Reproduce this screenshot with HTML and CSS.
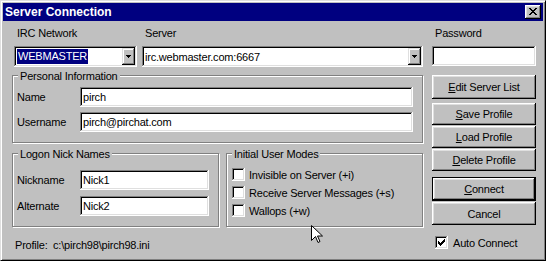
FILE: index.html
```html
<!DOCTYPE html>
<html lang="en">
<head>
  <meta charset="UTF-8">
  <title>Server Connection</title>
  <link rel="stylesheet" href="styles.css">
</head>
<body>
<div class="window">
  <div class="titlebar">
    <span class="title">Server Connection</span>
    <span class="close">
      <svg width="8" height="7" viewBox="0 0 8 7" shape-rendering="crispEdges"><path d="M0 0h2v1h-2z M6 0h2v1h-2z M1 1h2v1h-2z M5 1h2v1h-2z M2 2h4v1h-4z M3 3h2v1h-2z M2 4h4v1h-4z M1 5h2v1h-2z M5 5h2v1h-2z M0 6h2v1h-2z M6 6h2v1h-2z" fill="#000"/></svg>
    </span>
  </div>

  <div class="client">
    <div class="left">
      <div class="toprow">
        <div class="field network">
          <div class="caption">IRC Network</div>
          <div class="combo">
            <span class="selected">WEBMASTER</span>
            <span class="drop"><svg width="5" height="3" viewBox="0 0 5 3" shape-rendering="crispEdges"><path d="M0 0h5v1h-5z M1 1h3v1h-3z M2 2h1v1h-1z" fill="#000"/></svg></span>
          </div>
        </div>
        <div class="field server">
          <div class="caption">Server</div>
          <div class="combo">
            <span class="value">irc.webmaster.com:6667</span>
            <span class="drop"><svg width="5" height="3" viewBox="0 0 5 3" shape-rendering="crispEdges"><path d="M0 0h5v1h-5z M1 1h3v1h-3z M2 2h1v1h-1z" fill="#000"/></svg></span>
          </div>
        </div>
      </div>

      <div class="group personal">
        <div class="legend">Personal Information</div>
        <div class="row"><span class="label">Name</span><div class="edit wide">pirch</div></div>
        <div class="row"><span class="label">Username</span><div class="edit wide">pirch@pirchat.com</div></div>
      </div>

      <div class="bottomrow">
        <div class="group logon">
          <div class="legend">Logon Nick Names</div>
          <div class="row"><span class="label">Nickname</span><div class="edit nick">Nick1</div></div>
          <div class="row"><span class="label">Alternate</span><div class="edit nick">Nick2</div></div>
        </div>
        <div class="group modes">
          <div class="legend">Initial User Modes</div>
          <div class="check"><span class="box"></span>Invisible on Server (+i)</div>
          <div class="check"><span class="box"></span>Receive Server Messages (+s)</div>
          <div class="check"><span class="box"></span>Wallops (+w)</div>
        </div>
      </div>

      <div class="profile"><span class="profile-label">Profile:</span><span>c:\pirch98\pirch98.ini</span></div>
    </div>

    <div class="right">
      <div class="caption">Password</div>
      <div class="edit password"></div>
      <div class="btn edit-list"><span><u>E</u>dit Server List</span></div>
      <div class="btn save"><span><u>S</u>ave Profile</span></div>
      <div class="btn load"><span><u>L</u>oad Profile</span></div>
      <div class="btn delete"><span><u>D</u>elete Profile</span></div>
      <div class="btn connect"><span><u>C</u>onnect</span></div>
      <div class="btn cancel"><span>Cancel</span></div>
      <div class="check auto">
        <span class="box">
          <svg width="7" height="7" viewBox="0 0 7 7" shape-rendering="crispEdges"><path d="M6 0h1v1h-1z M5 1h2v1h-2z M0 2h1v1h-1z M4 2h3v1h-3z M0 3h2v1h-2z M3 3h3v1h-3z M0 4h5v1h-5z M1 5h3v1h-3z M2 6h1v1h-1z" fill="#000"/></svg>
        </span>Auto Connect
      </div>
    </div>
  </div>

  <!-- mouse pointer left in the shot -->
  <svg class="cursor" width="12" height="19" viewBox="0 0 12 19"><path d="M0.5 0.5 V15.5 L4.5 11.5 L7 17.5 L9 16.5 L6.5 11 H11.5 Z" fill="#fff" stroke="#000" stroke-width="1"/></svg>
</div>
</body>
</html>
```

FILE: styles.css
```css
body {
  margin: 0;
  background: #c0c0c0;
  font-family: "Liberation Sans", Arial, sans-serif;
  font-size: 11px;
  letter-spacing: -0.2px;
  color: #000;
}

/* window frame */
.window {
  position: relative;
  width: 546px;
  height: 261px;
  box-sizing: border-box;
  background: #c0c0c0;
  border: 1px solid;
  border-color: #dfdfdf #000 #000 #dfdfdf;
  box-shadow: inset 1px 1px #fff, inset -1px -1px #808080;
  padding: 2px;
}

.titlebar {
  height: 18px;
  background: #000080;
  color: #fff;
  display: flex;
  align-items: center;
  justify-content: space-between;
  padding: 0 2px;
}
.title {
  font-size: 12px;
  font-weight: bold;
  letter-spacing: 0;
}
.close {
  width: 16px;
  height: 14px;
  box-sizing: border-box;
  padding: 3px 0 0 4px;
  background: #c0c0c0;
  box-shadow: inset -1px -1px #000, inset 1px 1px #fff, inset -2px -2px #808080, inset 2px 2px #dfdfdf;
}
.close svg { display: block; }

.client {
  display: flex;
  gap: 9px;
  padding: 6px 0 0 9px;
}
.left { width: 411px; }
.right {
  width: 104px;
  display: flex;
  flex-direction: column;
}

.caption {
  height: 13px;
  line-height: 13px;
  padding-left: 3px;
  margin-bottom: 6px;
  white-space: nowrap;
}

/* sunken controls */
.combo, .edit, .box {
  background: #fff;
  box-shadow: inset -1px -1px #fff, inset 1px 1px #808080, inset -2px -2px #dfdfdf, inset 2px 2px #000;
}

.toprow {
  display: flex;
  gap: 5px;
  margin-left: 2px;
}
.network { width: 123px; }
.server { width: 281px; }
.combo {
  height: 21px;
  box-sizing: border-box;
  padding: 2px;
  display: flex;
  align-items: center;
}
.selected {
  margin-left: 1px;
  height: 15px;
  line-height: 15px;
  padding: 0 1px;
  background: #000080;
  color: #fff;
}
.value { padding-left: 1px; }
.drop {
  margin-left: auto;
  width: 13px;
  height: 17px;
  box-sizing: border-box;
  background: #c0c0c0;
  box-shadow: inset -1px -1px #000, inset 1px 1px #dfdfdf, inset -2px -2px #808080, inset 2px 2px #fff;
  display: flex;
  align-items: center;
  justify-content: center;
}
.drop svg { display: block; }

.edit {
  height: 20px;
  line-height: 20px;
  box-sizing: border-box;
  padding-left: 3px;
  white-space: nowrap;
}

/* etched group boxes */
.group {
  position: relative;
  box-sizing: border-box;
  border: 1px solid #808080;
  box-shadow: inset 1px 1px #fff, 1px 1px #fff;
}
.legend {
  position: absolute;
  top: -6px;
  left: 5px;
  padding: 0 2px;
  line-height: 13px;
  background: #c0c0c0;
  white-space: nowrap;
}
.row {
  display: flex;
  align-items: center;
}
.label { width: 63px; }

.personal {
  margin-top: 8px;
  height: 68px;
  padding: 11px 9px 0 4px;
  display: flex;
  flex-direction: column;
  gap: 5px;
}
.wide { flex: 1; }

.bottomrow {
  display: flex;
  gap: 7px;
  margin-top: 10px;
}
.logon {
  width: 207px;
  height: 74px;
  padding: 16px 0 0 4px;
  display: flex;
  flex-direction: column;
  gap: 6px;
}
.nick { width: 129px; }

.modes {
  width: 197px;
  height: 74px;
  padding: 14px 0 0 5px;
  display: flex;
  flex-direction: column;
  gap: 5px;
}
.check {
  display: flex;
  align-items: center;
  gap: 4px;
  height: 13px;
  white-space: nowrap;
}
.box {
  width: 13px;
  height: 13px;
  box-sizing: border-box;
  padding: 3px 0 0 3px;
  flex: none;
}
.box svg { display: block; }

.profile {
  margin-top: 12px;
  padding-left: 3px;
  line-height: 13px;
  display: flex;
}
.profile-label { width: 38px; }

/* right hand buttons */
.password { margin-top: 0; }
.btn {
  height: 22px;
  box-sizing: border-box;
  display: flex;
  align-items: center;
  justify-content: center;
  background: #c0c0c0;
  box-shadow: inset -1px -1px #000, inset 1px 1px #fff, inset -2px -2px #808080, inset 2px 2px #dfdfdf;
  white-space: nowrap;
}
.edit-list { margin-top: 9px; height: 24px; }
.save { margin-top: 4px; }
.load { margin-top: 1px; }
.delete { margin-top: 1px; }
.connect {
  margin-top: 6px;
  height: 24px;
  border: 1px solid #000;
}
.cancel { margin-top: 1px; height: 23px; }
.auto {
  margin-top: 11px;
  padding-left: 3px;
  gap: 5px;
}

.cursor {
  position: absolute;
  left: 310px;
  top: 224px;
}
```
